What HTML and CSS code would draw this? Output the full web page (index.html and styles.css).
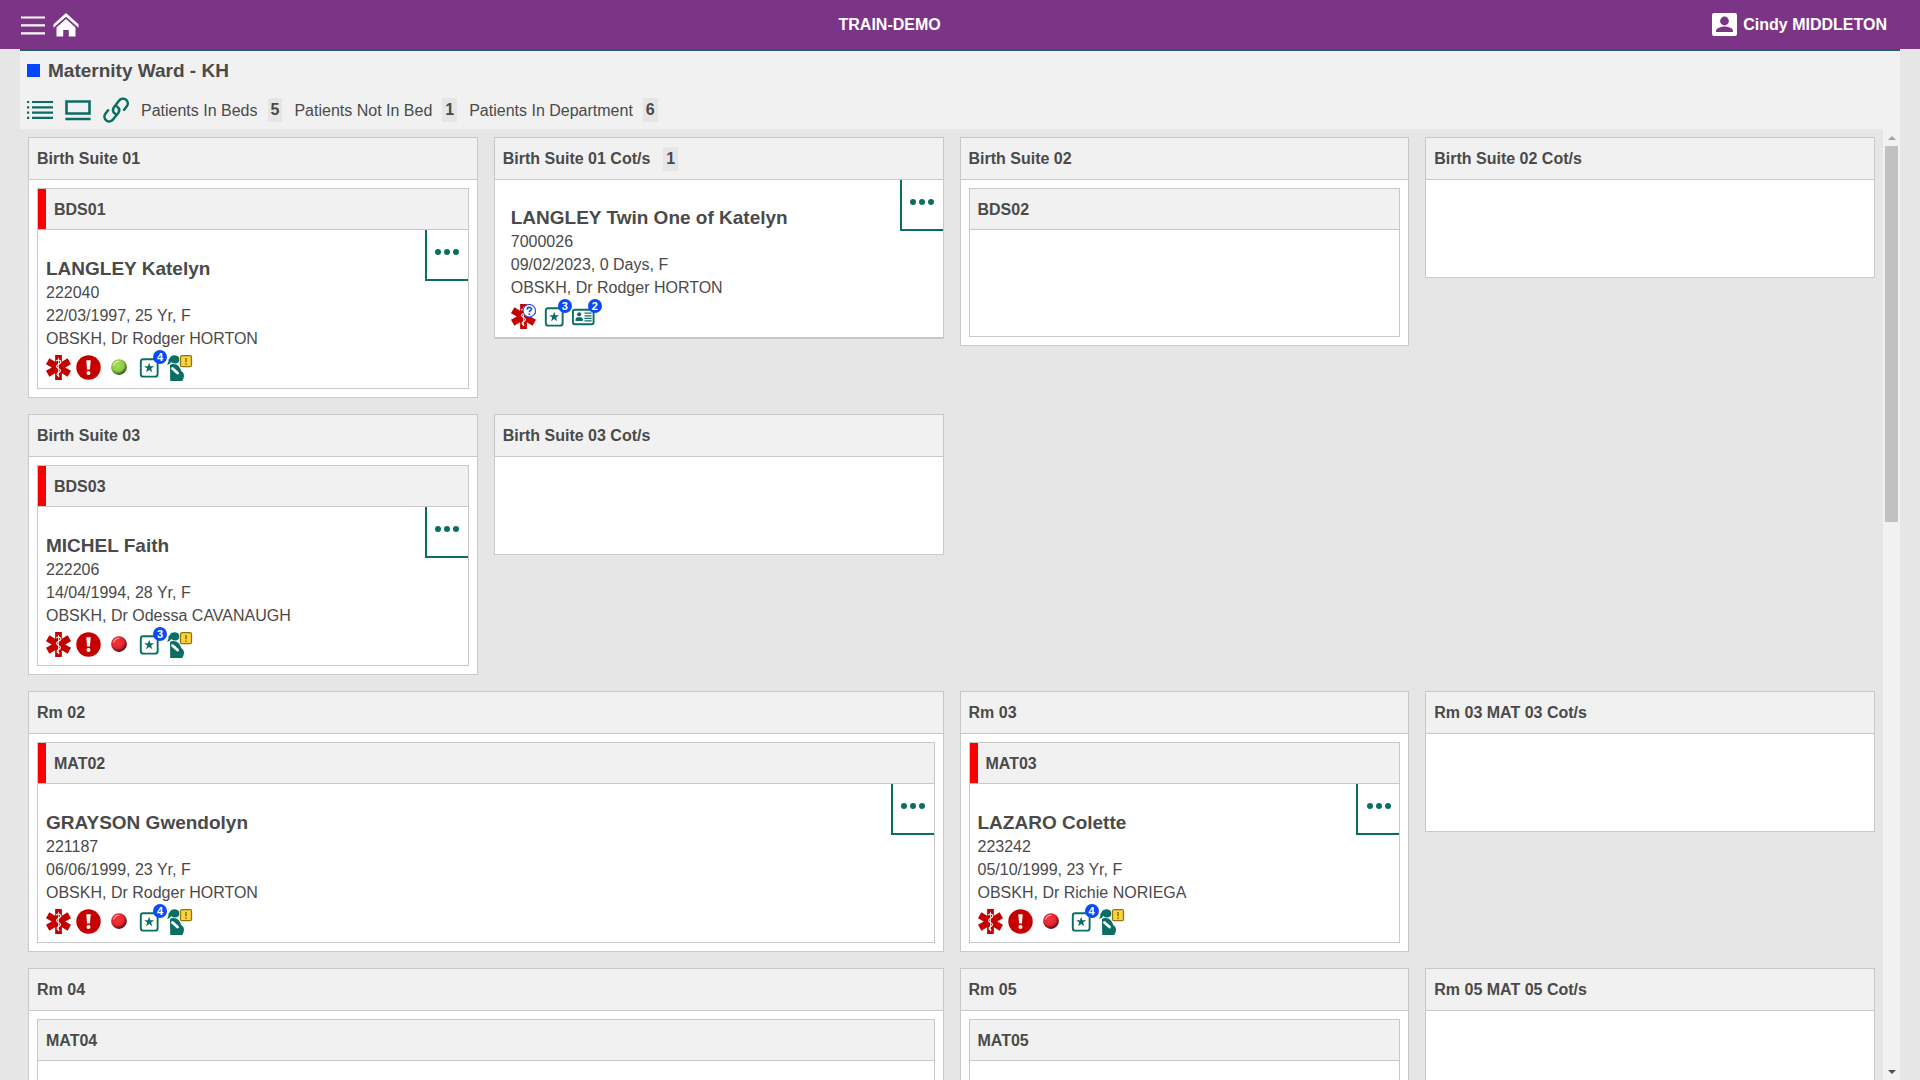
FILE: index.html
```
<!DOCTYPE html>
<html lang="en">
<head>
<meta charset="utf-8">
<title>Maternity Ward - KH</title>
<link rel="stylesheet" href="styles.css">
</head>
<body>
<svg class="sprite" aria-hidden="true">
  <defs>
    <radialGradient id="green-fill" cx="42%" cy="38%" r="60%"><stop offset="0" stop-color="#a4dc58"/><stop offset=".65" stop-color="#8cca45"/><stop offset="1" stop-color="#33561a"/></radialGradient>
    <radialGradient id="red-fill" cx="42%" cy="38%" r="60%"><stop offset="0" stop-color="#f8323a"/><stop offset=".65" stop-color="#e32630"/><stop offset="1" stop-color="#5a0c10"/></radialGradient>
  </defs>
  <symbol id="life" viewBox="0 0 26 26">
    <path fill="#c40000" d="M9.500 0h7v7l6-3.500 3.500 6L20 13l6 3.500-3.500 6-6-3.500v7h-7v-7l-6 3.500-3.500-6L6 13 0 9.500l3.500-6 6 3.500z"/>
    <path fill="none" stroke="#fff" stroke-width=".8" d="M13 3v20"/>
    <path fill="none" stroke="#fff" stroke-width="1.100" d="M10.500 6.500c1-2 4-1.500 5 .500s-5 2.500-4.500 5 4.500 2 4 4.500-3.500 1.500-3.500 3.500 1.500 1.500 2.500 2"/>
  </symbol>
  <symbol id="life-query" viewBox="0 0 26 26">
    <use href="#life"/>
    <circle cx="19" cy="7" r="6.500" fill="#fff" stroke="#2a56d8" stroke-width="1.200"/>
    <path fill="none" stroke="#1a4be0" stroke-width="1.700" d="M16.800 5.700c0-3 4.600-2.900 4.500-.300 0 1.600-2.200 1.500-2.200 3.300"/>
    <circle cx="19.100" cy="10.500" r="1" fill="#1a4be0"/>
  </symbol>
  <symbol id="alert" viewBox="0 0 26 26">
    <circle cx="13" cy="13" r="12.700" fill="#c60000"/>
    <path fill="#fff" d="M10.700 5.500h4.600l-.800 9.500h-3z"/>
    <circle cx="13" cy="18.700" r="2.100" fill="#fff"/>
  </symbol>
  <symbol id="green" viewBox="0 0 26 26"><circle cx="13.500" cy="12.500" r="8.200" fill="url(#green-fill)"/><path fill="none" stroke="#d8f4ae" stroke-width="1.200" stroke-linecap="round" d="M8 10.500a6 6 0 0 1 5.500-4"/></symbol>
  <symbol id="red" viewBox="0 0 26 26"><circle cx="13.500" cy="12.500" r="8.200" fill="url(#red-fill)"/><path fill="none" stroke="#ffa9a9" stroke-width="1.200" stroke-linecap="round" d="M8 10.500a6 6 0 0 1 5.500-4"/></symbol>
  <symbol id="star" viewBox="0 0 26 26">
    <rect x="5" y="4.500" width="17.500" height="18" rx="2.500" fill="#fff" stroke="#0b6e63" stroke-width="2"/>
    <path fill="#0b6e63" d="M13.700 8l1.300 3.700h3.900l-3.100 2.400 1.100 3.800-3.200-2.200-3.200 2.200 1.100-3.800-3.100-2.400h3.900z"/>
  </symbol>
  <symbol id="idcard" viewBox="0 0 26 26">
    <rect x="2" y="6" width="21.500" height="15" rx="2" fill="#fff" stroke="#0b6e63" stroke-width="2"/>
    <circle cx="8.500" cy="10.700" r="2.200" fill="#0b6e63"/>
    <path fill="#0b6e63" d="M4.700 17.800v-1.800q0-2.300 2.300-2.300h3q2.300 0 2.300 2.300v1.800z"/>
    <path fill="none" stroke="#0b6e63" stroke-width="1.200" d="M14 9.500h7.500M14 12.300h7.500M14 15h7.500M14 17.600h7.500"/>
  </symbol>
  <symbol id="mother" viewBox="0 0 28 26">
    <path fill="#0b6e63" d="M3.500 3.500Q5 0 9 .200q4.300.300 4.300 4.300 0 3.800-4.300 4-2.500 0-3.700-1.600Q4.600 9 1 10q2-3 1.500-5.500z"/>
    <path fill="#0b6e63" d="M4 10q1-.900 3-.900 4 0 6 2.300 1.500 2 2.200 4.600 2.800 1.500 2.800 5-.300 3-1.800 5H4.200z"/>
    <path fill="none" stroke="#fff" stroke-width="2.800" stroke-linecap="round" d="M6.500 13.500l5 4.500"/>
    <rect x="14.500" y=".700" width="11" height="11" rx="1.500" fill="#fbd33d" stroke="#8f7412" stroke-width="1.300"/>
    <path stroke="#8a6d08" stroke-width="1.500" d="M20 3v4.300M20 8.500v1.500"/>
  </symbol>
</svg>

<header class="topbar">
  <nav class="topbar-nav">
    <button class="icon-btn" aria-label="Menu"><svg width="24" height="24" viewBox="0 0 24 24"><path stroke="#fff" stroke-width="2.200" d="M0 4.500h24M0 12.300h24M0 20.300h24"/></svg></button>
    <a class="icon-btn" href="#" aria-label="Home"><svg width="26" height="24" viewBox="0 0 26 24"><path fill="#fff" d="M13 0l12.500 11.300v3.500L13 3.700.500 14.800v-3.500z"/><path fill="#fff" d="M13 6l9.500 8.500V23.500h-6.700v-6.500h-5.600v6.500H3.500v-9z"/></svg></a>
  </nav>
  <div class="topbar-title">TRAIN-DEMO</div>
  <a class="user" href="#"><svg width="25" height="23" viewBox="0 0 25 23"><rect width="25" height="23" rx="2" fill="#fff"/><circle cx="12.500" cy="8" r="4.400" fill="#7c3487"/><path fill="#7c3487" d="M4 19v-1.500c1-3 5.500-4 8.500-4s7.500 1 8.500 4V19z"/></svg>Cindy MIDDLETON</a>
</header>

<main class="shell">
  <section class="ward">
    <h1 class="ward-title"><span class="ward-mark"></span>Maternity Ward - KH</h1>
    <div class="ward-tools">
      <button class="icon-btn" aria-label="List view"><svg width="26" height="20" viewBox="0 0 26 20"><path fill="none" stroke="#0b6e63" stroke-width="2.200" d="M0 2h2.200M5 2h21M0 7.300h2.200M5 7.300h21M0 12.600h2.200M5 12.600h21M0 17.900h2.200M5 17.900h21"/></svg></button>
      <button class="icon-btn" aria-label="Board view"><svg width="26" height="22" viewBox="0 0 26 22"><path fill="none" stroke="#0b6e63" stroke-width="2.600" d="M1.500 2.500h23v12h-23zM.400 20h25.200"/></svg></button>
      <button class="icon-btn" aria-label="Copy link"><svg width="26" height="26" viewBox="0 0 26 26"><g fill="none" stroke="#0b6e63" stroke-width="2.500" stroke-linecap="round"><path d="M12.200 16.800c-2.400-1.700-2.700-4.300-1.200-6.500l5-6.500c1.700-2.300 4.600-2.800 6.800-1.200s2.600 4.400 1 6.700l-2.700 3.500"/><path d="M14 9.500c2.400 1.700 2.700 4.300 1.200 6.500l-5 6.300c-1.700 2.300-4.600 2.800-6.800 1.200s-2.600-4.400-1-6.700l2.700-3.500"/></g></svg></button>
      <dl class="stats">
        <div class="stat"><dt>Patients In Beds</dt><dd class="count">5</dd></div>
        <div class="stat"><dt>Patients Not In Bed</dt><dd class="count">1</dd></div>
        <div class="stat"><dt>Patients In Department</dt><dd class="count">6</dd></div>
      </dl>
    </div>
  </section>

  <div class="viewport">
    <div class="board">
      <section class="room">
        <h2 class="room-head">Birth Suite 01</h2>
        <div class="room-beds"><article class="bed">
          <h3 class="bed-head occupied">BDS01</h3>
          <div class="patient">
            <button class="more" aria-label="More actions"><i></i><i></i><i></i></button>
            <h4 class="name">LANGLEY Katelyn</h4>
            <p>222040</p><p>22/03/1997, 25 Yr, F</p><p>OBSKH, Dr Rodger HORTON</p>
            <div class="flags"><span class="flag"><svg><use href="#life"/></svg></span><span class="flag"><svg><use href="#alert"/></svg></span><span class="flag"><svg><use href="#green"/></svg></span><span class="flag"><svg><use href="#star"/></svg><b class="badge">4</b></span><span class="flag wide"><svg><use href="#mother"/></svg></span></div>
          </div>
        </article></div>
      </section>
      <section class="room">
        <h2 class="room-head">Birth Suite 01 Cot/s <span class="count">1</span></h2>
        <div class="patient cot">
          <button class="more" aria-label="More actions"><i></i><i></i><i></i></button>
          <h4 class="name">LANGLEY Twin One of Katelyn</h4>
          <p>7000026</p><p>09/02/2023, 0 Days, F</p><p>OBSKH, Dr Rodger HORTON</p>
          <div class="flags"><span class="flag"><svg><use href="#life-query"/></svg></span><span class="flag"><svg><use href="#star"/></svg><b class="badge">3</b></span><span class="flag"><svg><use href="#idcard"/></svg><b class="badge">2</b></span></div>
        </div>
      </section>
      <section class="room">
        <h2 class="room-head">Birth Suite 02</h2>
        <div class="room-beds"><article class="bed"><h3 class="bed-head">BDS02</h3><div class="vacant"></div></article></div>
      </section>
      <section class="room"><h2 class="room-head">Birth Suite 02 Cot/s</h2><div class="empty"></div></section>

      <section class="room first">
        <h2 class="room-head">Birth Suite 03</h2>
        <div class="room-beds"><article class="bed">
          <h3 class="bed-head occupied">BDS03</h3>
          <div class="patient">
            <button class="more" aria-label="More actions"><i></i><i></i><i></i></button>
            <h4 class="name">MICHEL Faith</h4>
            <p>222206</p><p>14/04/1994, 28 Yr, F</p><p>OBSKH, Dr Odessa CAVANAUGH</p>
            <div class="flags"><span class="flag"><svg><use href="#life"/></svg></span><span class="flag"><svg><use href="#alert"/></svg></span><span class="flag"><svg><use href="#red"/></svg></span><span class="flag"><svg><use href="#star"/></svg><b class="badge">3</b></span><span class="flag wide"><svg><use href="#mother"/></svg></span></div>
          </div>
        </article></div>
      </section>
      <section class="room"><h2 class="room-head">Birth Suite 03 Cot/s</h2><div class="empty"></div></section>

      <section class="room first double">
        <h2 class="room-head">Rm 02</h2>
        <div class="room-beds"><article class="bed">
          <h3 class="bed-head occupied">MAT02</h3>
          <div class="patient">
            <button class="more" aria-label="More actions"><i></i><i></i><i></i></button>
            <h4 class="name">GRAYSON Gwendolyn</h4>
            <p>221187</p><p>06/06/1999, 23 Yr, F</p><p>OBSKH, Dr Rodger HORTON</p>
            <div class="flags"><span class="flag"><svg><use href="#life"/></svg></span><span class="flag"><svg><use href="#alert"/></svg></span><span class="flag"><svg><use href="#red"/></svg></span><span class="flag"><svg><use href="#star"/></svg><b class="badge">4</b></span><span class="flag wide"><svg><use href="#mother"/></svg></span></div>
          </div>
        </article></div>
      </section>
      <section class="room">
        <h2 class="room-head">Rm 03</h2>
        <div class="room-beds"><article class="bed">
          <h3 class="bed-head occupied">MAT03</h3>
          <div class="patient">
            <button class="more" aria-label="More actions"><i></i><i></i><i></i></button>
            <h4 class="name">LAZARO Colette</h4>
            <p>223242</p><p>05/10/1999, 23 Yr, F</p><p>OBSKH, Dr Richie NORIEGA</p>
            <div class="flags"><span class="flag"><svg><use href="#life"/></svg></span><span class="flag"><svg><use href="#alert"/></svg></span><span class="flag"><svg><use href="#red"/></svg></span><span class="flag"><svg><use href="#star"/></svg><b class="badge">4</b></span><span class="flag wide"><svg><use href="#mother"/></svg></span></div>
          </div>
        </article></div>
      </section>
      <section class="room"><h2 class="room-head">Rm 03 MAT 03 Cot/s</h2><div class="empty"></div></section>

      <section class="room first double">
        <h2 class="room-head">Rm 04</h2>
        <div class="room-beds"><article class="bed"><h3 class="bed-head">MAT04</h3><div class="vacant"></div></article></div>
      </section>
      <section class="room">
        <h2 class="room-head">Rm 05</h2>
        <div class="room-beds"><article class="bed"><h3 class="bed-head">MAT05</h3><div class="vacant"></div></article></div>
      </section>
      <section class="room"><h2 class="room-head">Rm 05 MAT 05 Cot/s</h2><div class="empty"></div></section>
    </div>
    <div class="scrollbar" aria-hidden="true">
      <span class="arrow up"></span>
      <div class="track"><div class="thumb"></div></div>
      <span class="arrow down"></span>
    </div>
  </div>
</main>
</body>
</html>
```
FILE: styles.css
```
* { box-sizing: border-box; }

body {
  margin: 0;
  height: 100vh;
  display: flex;
  flex-direction: column;
  overflow: hidden;
  background: #e6e6e6;
  color: #4a4a4a;
  font: 16px/23px "Liberation Sans", Arial, sans-serif;
}

h1, h2, h3, h4, p, dl, dd { margin: 0; }
svg { display: block; }
.sprite { position: absolute; width: 0; height: 0; }

.icon-btn {
  display: block;
  padding: 0;
  border: 0;
  background: none;
  cursor: pointer;
}

/* Top bar */
.topbar {
  display: flex;
  justify-content: space-between;
  align-items: center;
  flex: none;
  height: 49px;
  padding: 0 33px 0 21px;
  background: #7c3487;
  color: #fff;
  font-weight: bold;
}
.topbar-nav { display: flex; gap: 8px; align-items: center; }
.topbar-title { padding-right: 12px; }
.user {
  display: flex;
  gap: 6px;
  align-items: center;
  color: inherit;
  text-decoration: none;
}

/* Ward summary */
.shell {
  display: flex;
  flex: 1;
  flex-direction: column;
  min-height: 0;
  margin: 0 20px;
}
.ward {
  flex: none;
  padding: 6px 7px;
  border-top: 2px solid #29596b;
  background: #f1f1f1;
}
.ward-title {
  display: flex;
  gap: 8px;
  align-items: center;
  height: 26px;
  font-size: 19px;
}
.ward-mark { width: 13px; height: 13px; background: #0046ff; }
.ward-tools { display: flex; gap: 12px; align-items: center; height: 40px; padding-top: 14px; }
.ward-tools .icon-btn { flex: none; }
.stats, .stat { display: flex; align-items: center; }
.stats { gap: 12px; }
.stat { gap: 10px; }
.count {
  padding: 0 3px;
  background: #e6e6e6;
  font-weight: bold;
  line-height: 24px;
}

/* Board */
.viewport { display: flex; flex: 1; min-height: 0; }
.board {
  display: grid;
  flex: 1;
  grid-template-columns: repeat(4, minmax(0, 1fr));
  gap: 16px;
  align-content: start;
  align-items: start;
  padding: 8px;
  overflow: hidden;
}
.room { border: 1px solid #c8c8c8; background: #fff; }
.room.first { grid-column: 1; }
.room.double { grid-column: 1 / span 2; }
.room-head, .bed-head {
  display: flex;
  align-items: center;
  border-bottom: 1px solid #c8c8c8;
  background: #f1f1f1;
  font-size: 16px;
  padding-left: 8px;
}
.room-head { gap: 13px; height: 42px; }
.bed-head { height: 41px; }
.bed-head.occupied { position: relative; padding-left: 16px; }
.bed-head.occupied::before {
  content: "";
  position: absolute;
  inset: 0 auto 0 0;
  width: 8px;
  background: #f60000;
}
.room-beds { padding: 8px; }
.bed { border: 1px solid #c8c8c8; }
.vacant { height: 106px; }
.empty { height: 97px; }

/* Patient */
.patient { position: relative; padding: 27px 8px 8px; }
.patient.cot { padding: 26px 16px 8px; border-bottom: 1px solid #c8c8c8; }
.name { font-size: 19px; line-height: 24px; }
.more {
  position: absolute;
  top: 0;
  right: 0;
  display: flex;
  gap: 3px;
  justify-content: center;
  width: 43px;
  height: 51px;
  padding: 19px 0 0;
  border: solid #0b6e63;
  border-width: 0 0 2px 2px;
  background: #fff;
  cursor: pointer;
}
.more i { width: 6px; height: 6px; border-radius: 50%; background: #0b6e63; }
.flags { display: flex; gap: 5px; padding-top: 5px; }
.flag { position: relative; }
.flag svg { width: 25px; height: 25px; }
.flag.wide svg { width: 28px; height: 26px; margin-bottom: -1px; }
.badge {
  position: absolute;
  top: -5px;
  right: -6px;
  width: 14px;
  border-radius: 50%;
  background: #0a4bf5;
  color: #fff;
  font-size: 11px;
  line-height: 14px;
  text-align: center;
}

/* Scroll bar */
.scrollbar {
  display: flex;
  flex: none;
  flex-direction: column;
  width: 17px;
  background: #f1f1f1;
}
.arrow { display: grid; place-items: center; height: 17px; }
.arrow::before { content: ""; border: 4px solid transparent; }
.arrow.up::before { border-top: 0; border-bottom-color: #a3a3a3; }
.arrow.down::before { border-bottom: 0; border-top-color: #505050; }
.track { flex: 1; padding: 0 2px; }
.thumb { height: 41%; background: #c1c1c1; }
```
